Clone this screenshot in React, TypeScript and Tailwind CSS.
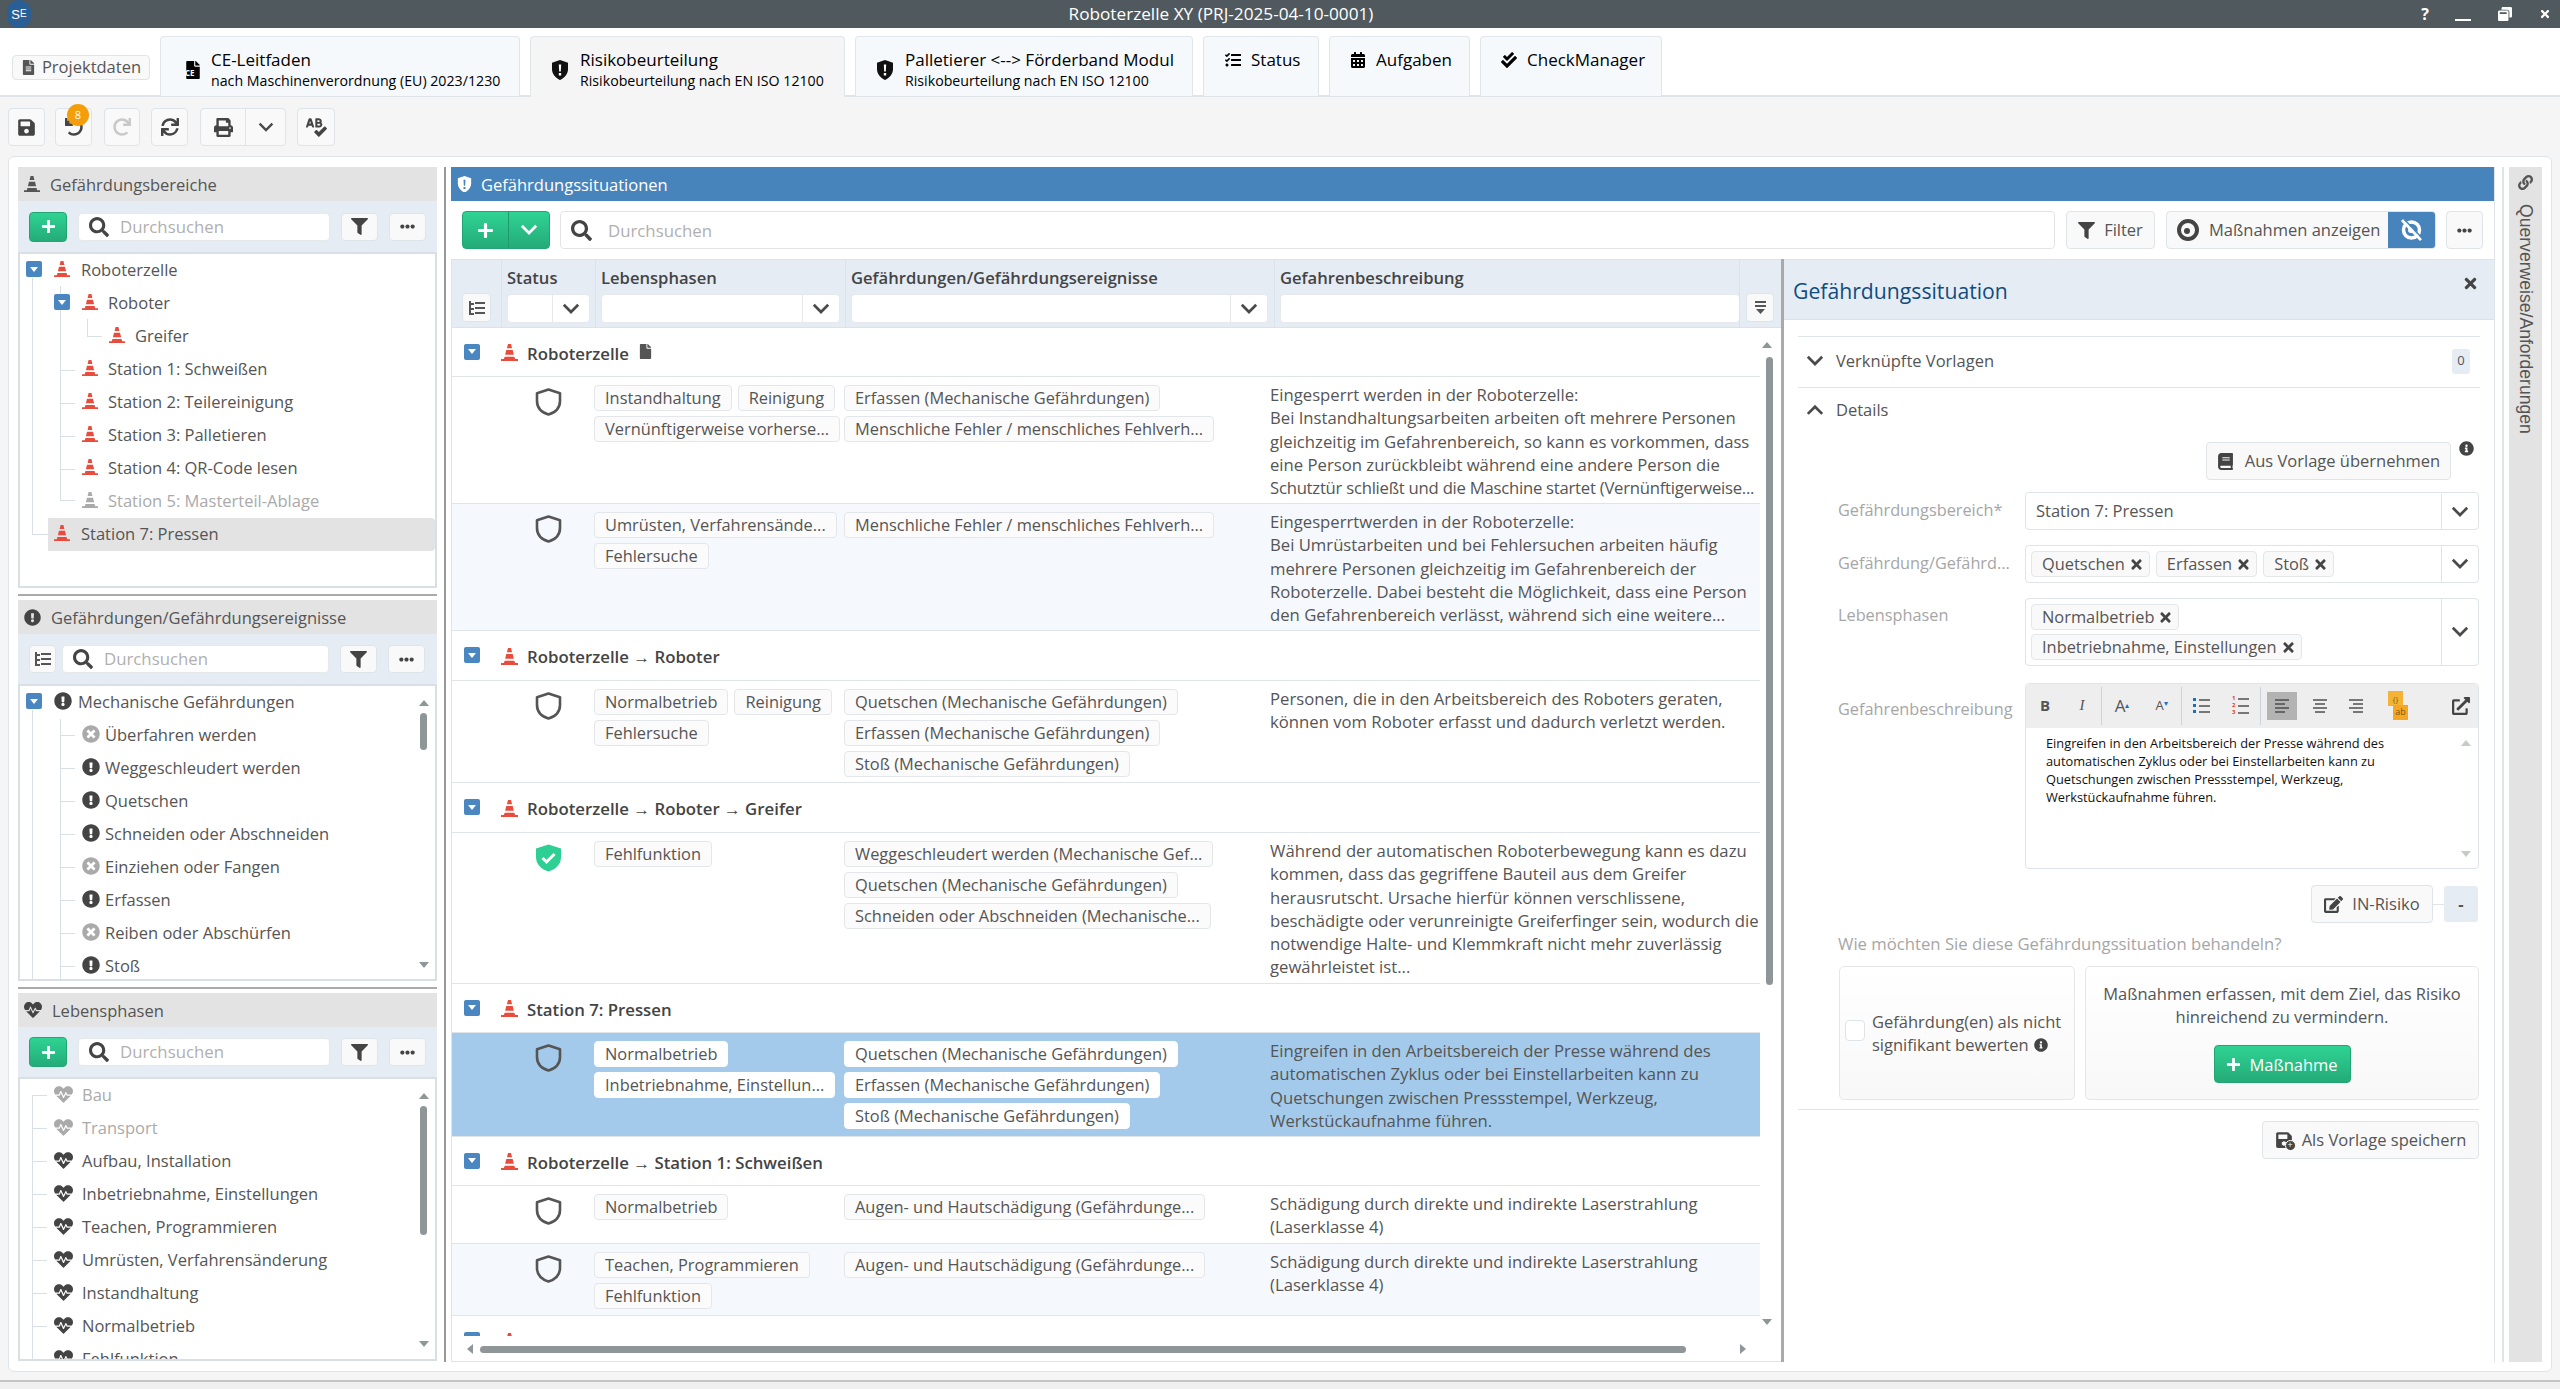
import type { ReactNode } from "react";
import {
  FaBook,
  FaCalendarAlt,
  FaCheckDouble,
  FaEdit,
  FaEllipsisH,
  FaExclamationCircle,
  FaExternalLinkAlt,
  FaFile,
  FaFileAlt,
  FaFilter,
  FaHeartbeat,
  FaInfoCircle,
  FaLink,
  FaPlus,
  FaPrint,
  FaRedo,
  FaSave,
  FaSearch,
  FaSpellCheck,
  FaSync,
  FaTasks,
  FaTimes,
  FaTimesCircle,
  FaUndo,
  FaWindowRestore,
} from "react-icons/fa";

const btn = "border border-[#dfe4e8] bg-[#f9f9f9] rounded-[4px] flex items-center justify-center shrink-0";
const green = "bg-linear-to-b from-[#2fd394] to-[#24ab78] border border-[#22a574] rounded-[4px] text-white flex items-center justify-center shrink-0";

function Cone({ color = "#e84c3d", size = 16 }: { color?: string; size?: number }) {
  return (
    <svg width={size} height={size} viewBox="0 0 18 18" className="shrink-0">
      <path fill={color} d="M7.4 0h3.2l1.1 4.4H6.3zM5.6 6.4h6.8l1.2 5H4.4zM3.9 13.4h10.2l.8 2.6H18v2H0v-2h3.1z" />
    </svg>
  );
}

function Chevron({ up = false, size = 18, color = "#4a4a4a" }: { up?: boolean; size?: number; color?: string }) {
  return (
    <svg width={size} height={size * 0.65} viewBox="0 0 20 13" className="shrink-0">
      <path d={up ? "M2 11l8-8 8 8" : "M2 2l8 8 8-8"} fill="none" stroke={color} strokeWidth="3" />
    </svg>
  );
}

function Shield({ ok = false }: { ok?: boolean }) {
  if (ok) {
    return (
      <svg width="29" height="30" viewBox="0 0 29 30" className="shrink-0">
        <path fill="#2ecf92" d="M14.5 1.5 27 5.5V14c0 7.5-5.5 12.5-12.5 14.5C7.5 26.5 2 21.5 2 14V5.5z" />
        <path fill="none" stroke="#fff" strokeWidth="3" d="M8.5 15l4 4 8-8" />
      </svg>
    );
  }
  return (
    <svg width="29" height="30" viewBox="0 0 29 30" className="shrink-0">
      <path fill="none" stroke="#555" strokeWidth="2.6" strokeLinejoin="round" d="M14.5 2.5 26 6.3V14c0 6.8-5 11.5-11.5 13.5C8 25.5 3 20.8 3 14V6.3z" />
    </svg>
  );
}

function AlertShield({ color = "#111", mark = "#fff", size = 18 }: { color?: string; mark?: string; size?: number }) {
  return (
    <svg width={size} height={size * 1.12} viewBox="0 0 18 20" className="shrink-0">
      <path fill={color} d="M9 0l8 2.6V9c0 5-3.4 8.6-8 11-4.6-2.4-8-6-8-11V2.6z" />
      <path fill={mark} d="M7.8 4.5h2.4l-.4 7H8.2zM7.8 13h2.400v2.400H7.800z" />
    </svg>
  );
}

function TreeListIcon() {
  return (
    <svg width="16" height="14" viewBox="0 0 16 14" className="shrink-0">
      <path fill="#555" d="M0 0h2v14H0zM2 2h3v2H2zM2 7h3v2H2zM2 12h3v2H2zM6 1h10v2H6zM6 6h10v2H6zM6 11h10v2H6z" />
    </svg>
  );
}

function Tri({ down = false }: { down?: boolean }) {
  return (
    <svg width="10" height="6" viewBox="0 0 10 6">
      <path fill="#8e9698" d={down ? "M0 0h10L5 6z" : "M0 6h10L5 0z"} />
    </svg>
  );
}

function Expander() {
  return (
    <span className="w-[16px] h-[16px] rounded-[2px] bg-[#4a86c0] flex items-center justify-center shrink-0">
      <svg width="8" height="5" viewBox="0 0 8 5">
        <path fill="#fff" d="M0 0h8L4 5z" />
      </svg>
    </span>
  );
}

function Tab({ w, active, icon, title, sub, gap }: { w: string; active?: boolean; icon: ReactNode; title: string; sub?: string; gap: string }) {
  return (
    <div className={`${w} h-[60px] shrink-0 rounded-t-[4px] border border-[#e1e6ea] flex items-start text-black ${active ? "bg-[#f5f5f5] border-b-0 h-[61px] relative z-10" : "bg-[#f5f9fc] border-b-0"}`}>
      <div className={`flex ${gap} ${sub ? "items-center h-[44px] mt-[11px]" : "items-center h-[30px] mt-[8px]"}`}>
        {icon}
        <div className="whitespace-nowrap">
          <div className="text-[17px] leading-[22px]">{title}</div>
          {sub && <div className="text-[14.2px] leading-[20px]">{sub}</div>}
        </div>
      </div>
    </div>
  );
}

function TitleBar() {
  return (
    <div className="h-[28px] bg-[#50595e] flex items-center text-white shrink-0 relative">
      <div className="ml-[7px] w-[24px] h-[28px] rounded-full bg-[#2a5f96] flex items-center justify-center text-[13px] leading-none font-['Liberation_Sans',sans-serif]">
        S<span className="text-[10px]">E</span>
      </div>
      <div className="w-[2442px] text-center text-[17.2px] leading-[28px] absolute left-0 top-0">Roboterzelle XY (PRJ-2025-04-10-0001)</div>
      <div className="ml-auto flex items-center mr-[9px]">
        <span className="text-[16px] font-bold mr-[26px]">?</span>
        <span className="w-[16px] h-[2px] bg-white mt-[12px] mr-[27px]" />
        <FaWindowRestore size={14} className="mr-[27px]" />
        <FaTimes size={12} />
      </div>
    </div>
  );
}

function FileCe() {
  return (
    <span className="relative w-[14px] h-[18px] shrink-0">
      <FaFile size={18} className="text-black" />
      <span className="absolute left-[1px] top-[7px] text-[8px] leading-[9px] font-bold text-white">CE</span>
    </span>
  );
}

function TabRow() {
  return (
    <div className="h-[69px] bg-white border-b-2 border-[#dfe4e8] flex items-end shrink-0 pl-[12px]">
      <div className={`${btn} w-[138px] h-[25px] mr-[10px] mb-[15px] gap-[6px] text-[16.5px] text-[#555]`}>
        <FaFileAlt size={15} />
        Projektdaten
      </div>
      <div className="flex gap-[10px] -mb-[2px]">
        <Tab w="w-[360px] pl-[23px]" gap="gap-[13px]" icon={<FileCe />} title="CE-Leitfaden" sub="nach Maschinenverordnung (EU) 2023/1230" />
        <Tab w="w-[315px] pl-[20px]" gap="gap-[11px]" active icon={<AlertShield />} title="Risikobeurteilung" sub="Risikobeurteilung nach EN ISO 12100" />
        <Tab w="w-[338px] pl-[20px]" gap="gap-[11px]" icon={<AlertShield />} title="Palletierer <--> Förderband Modul" sub="Risikobeurteilung nach EN ISO 12100" />
        <Tab w="w-[116px] pl-[21px]" gap="gap-[10px]" icon={<FaTasks size={16} />} title="Status" />
        <Tab w="w-[141px] pl-[20px]" gap="gap-[10px]" icon={<FaCalendarAlt size={16} />} title="Aufgaben" />
        <Tab w="w-[182px] pl-[20px]" gap="gap-[10px]" icon={<FaCheckDouble size={16} />} title="CheckManager" />
      </div>
    </div>
  );
}

function MainToolbar() {
  return (
    <div className="h-[59px] flex items-start pt-[11px] pl-[8px] shrink-0 text-[#444]">
      <div className={`${btn} w-[37px] h-[38px]`}>
        <FaSave size={19} />
      </div>
      <div className={`${btn} w-[37px] h-[38px] ml-[10px] relative`}>
        <FaUndo size={18} />
        <span className="absolute -top-[5px] left-[11px] w-[22px] h-[22px] rounded-full bg-[#f59e0b] text-white text-[11px] flex items-center justify-center">8</span>
      </div>
      <div className={`${btn} w-[36px] h-[38px] ml-[12px] text-[#c9c9c9]`}>
        <FaRedo size={18} />
      </div>
      <div className={`${btn} w-[37px] h-[38px] ml-[11px]`}>
        <FaSync size={18} />
      </div>
      <div className={`${btn} w-[86px] h-[38px] ml-[12px]`}>
        <span className="w-[45px] h-full flex items-center justify-center border-r border-[#dfe4e8]">
          <FaPrint size={19} />
        </span>
        <span className="flex-1 flex justify-center">
          <Chevron size={16} />
        </span>
      </div>
      <div className={`${btn} w-[38px] h-[38px] ml-[11px]`}>
        <FaSpellCheck size={21} />
      </div>
    </div>
  );
}

function SmallSearch({ w }: { w: string }) {
  return (
    <div className={`${w} h-[28px] bg-white border border-[#e6e9ec] rounded-[4px] flex items-center gap-[11px] pl-[10px] shrink-0`}>
      <FaSearch size={20} className="text-[#444]" />
      <span className="text-[16.8px] text-[#b0b0b0]">Durchsuchen</span>
    </div>
  );
}

function Section({
  icon,
  title,
  tree,
  add,
  toolH,
  treeH,
  children,
}: {
  icon: ReactNode;
  title: string;
  tree?: boolean;
  add?: boolean;
  toolH: string;
  treeH: string;
  children: ReactNode;
}) {
  return (
    <div className="w-[419px] flex flex-col shrink-0">
      <div className="h-[34px] bg-[#e3e3e3] flex items-center pl-[6px] gap-[10px] text-[16.5px] text-[#555]">
        {icon}
        <span className="pt-[2px]">{title}</span>
      </div>
      <div className={`${toolH} bg-[#e6ecf4] flex items-center pl-[11px] pr-[12px]`}>
        {add && (
          <div className={`${green} w-[38px] h-[30px] mr-[11px]`}>
            <FaPlus size={15} />
          </div>
        )}
        {tree && (
          <div className={`${btn} w-[27px] h-[28px] mr-[6px]`}>
            <TreeListIcon />
          </div>
        )}
        <SmallSearch w={add ? "w-[252px]" : "w-[267px]"} />
        <div className={`${btn} w-[37px] h-[28px] ml-[11px] text-[#444]`}>
          <FaFilter size={17} />
        </div>
        <div className={`${btn} w-[37px] h-[28px] ml-[11px] text-[#444]`}>
          <FaEllipsisH size={15} />
        </div>
      </div>
      <div className={`${treeH} relative border-2 border-[#d8dfe5] overflow-hidden bg-white text-[16.5px] text-[#555]`}>{children}</div>
    </div>
  );
}

function TreeRow({ pl, exp, icon, text, muted, selected, gap }: { pl: string; exp?: boolean; icon: ReactNode; text: string; muted?: boolean; selected?: boolean; gap: string }) {
  return (
    <div className={`h-[33px] shrink-0 flex items-center relative whitespace-nowrap ${pl} ${muted ? "text-[#aaaaaa]" : ""}`}>
      {selected && <span className="absolute left-[28px] right-0 top-0 bottom-0 bg-[#e3e3e3] rounded-r-[4px]" />}
      {exp && (
        <span className="mr-[12px] relative -mt-[3px]">
          <Expander />
        </span>
      )}
      <span className={`relative -mt-[3px] ${gap}`}>{icon}</span>
      <span className="relative">{text}</span>
    </div>
  );
}

function Line({ c }: { c: string }) {
  return <span className={`absolute bg-[#d8dfe5] ${c}`} />;
}

function MiniScroll({ thumb, up, down }: { thumb: string; up: string; down: string }) {
  return (
    <>
      <span className={`absolute left-[399px] ${up}`}>
        <Tri />
      </span>
      <span className={`absolute left-[400px] w-[7px] rounded-full bg-[#8e9698] ${thumb}`} />
      <span className={`absolute left-[399px] ${down}`}>
        <Tri down />
      </span>
    </>
  );
}

function LeftColumn() {
  const hz = (muted: boolean) =>
    muted ? <FaTimesCircle size={18} className="text-[#aaaaaa]" /> : <FaExclamationCircle size={18} className="text-[#444]" />;
  const heart = (muted: boolean) => <FaHeartbeat size={19} className={muted ? "text-[#aaaaaa]" : "text-[#444]"} />;
  return (
    <div className="w-[419px] shrink-0 flex flex-col">
      <Section add icon={<Cone color="#555" />} title="Gefährdungsbereiche" toolH="h-[51px]" treeH="h-[336px]">
        <Line c="left-[12px] top-[24px] w-px h-[256px]" />
        <Line c="left-[12px] top-[280px] w-[16px] h-px" />
        <Line c="left-[40px] top-[32px] w-px h-[214px]" />
        <Line c="left-[40px] top-[116px] w-[15px] h-px" />
        <Line c="left-[40px] top-[149px] w-[15px] h-px" />
        <Line c="left-[40px] top-[182px] w-[15px] h-px" />
        <Line c="left-[40px] top-[215px] w-[15px] h-px" />
        <Line c="left-[40px] top-[246px] w-[15px] h-px" />
        <Line c="left-[67px] top-[65px] w-px h-[17px]" />
        <Line c="left-[67px] top-[82px] w-[15px] h-px" />
        <TreeRow pl="pl-[6px]" exp gap="mr-[11px]" icon={<Cone />} text="Roboterzelle" />
        <TreeRow pl="pl-[34px]" exp gap="mr-[10px]" icon={<Cone />} text="Roboter" />
        <TreeRow pl="pl-[89px]" gap="mr-[10px]" icon={<Cone />} text="Greifer" />
        <TreeRow pl="pl-[62px]" gap="mr-[10px]" icon={<Cone />} text="Station 1: Schweißen" />
        <TreeRow pl="pl-[62px]" gap="mr-[10px]" icon={<Cone />} text="Station 2: Teilereinigung" />
        <TreeRow pl="pl-[62px]" gap="mr-[10px]" icon={<Cone />} text="Station 3: Palletieren" />
        <TreeRow pl="pl-[62px]" gap="mr-[10px]" icon={<Cone />} text="Station 4: QR-Code lesen" />
        <TreeRow pl="pl-[62px]" gap="mr-[10px]" muted icon={<Cone color="#aaaaaa" />} text="Station 5: Masterteil-Ablage" />
        <TreeRow pl="pl-[34px]" gap="mr-[11px]" selected icon={<Cone />} text="Station 7: Pressen" />
      </Section>
      <div className="h-[2px] bg-[#aaaaaa] mt-[6px] mb-[4px]" />
      <Section tree icon={<FaExclamationCircle size={17} className="text-[#444]" />} title="Gefährdungen/Gefährdungsereignisse" toolH="h-[50px]" treeH="h-[297px]">
        <Line c="left-[12px] top-[24px] w-px h-[280px]" />
        <Line c="left-[40px] top-[33px] w-px h-[270px]" />
        <Line c="left-[40px] top-[49px] w-[15px] h-px" />
        <Line c="left-[40px] top-[82px] w-[15px] h-px" />
        <Line c="left-[40px] top-[115px] w-[15px] h-px" />
        <Line c="left-[40px] top-[148px] w-[15px] h-px" />
        <Line c="left-[40px] top-[181px] w-[15px] h-px" />
        <Line c="left-[40px] top-[214px] w-[15px] h-px" />
        <Line c="left-[40px] top-[247px] w-[15px] h-px" />
        <Line c="left-[40px] top-[280px] w-[15px] h-px" />
        <TreeRow pl="pl-[6px]" exp gap="mr-[6px]" icon={hz(false)} text="Mechanische Gefährdungen" />
        <TreeRow pl="pl-[62px]" gap="mr-[5px]" icon={hz(true)} text="Überfahren werden" />
        <TreeRow pl="pl-[62px]" gap="mr-[5px]" icon={hz(false)} text="Weggeschleudert werden" />
        <TreeRow pl="pl-[62px]" gap="mr-[5px]" icon={hz(false)} text="Quetschen" />
        <TreeRow pl="pl-[62px]" gap="mr-[5px]" icon={hz(false)} text="Schneiden oder Abschneiden" />
        <TreeRow pl="pl-[62px]" gap="mr-[5px]" icon={hz(true)} text="Einziehen oder Fangen" />
        <TreeRow pl="pl-[62px]" gap="mr-[5px]" icon={hz(false)} text="Erfassen" />
        <TreeRow pl="pl-[62px]" gap="mr-[5px]" icon={hz(true)} text="Reiben oder Abschürfen" />
        <TreeRow pl="pl-[62px]" gap="mr-[5px]" icon={hz(false)} text="Stoß" />
        <MiniScroll up="top-[14px]" thumb="top-[27px] h-[37px]" down="top-[276px]" />
      </Section>
      <div className="h-[2px] bg-[#aaaaaa] mt-[6px] mb-[4px]" />
      <Section add icon={<FaHeartbeat size={18} className="text-[#444]" />} title="Lebensphasen" toolH="h-[50px]" treeH="h-[284px]">
        <Line c="left-[12px] top-[16px] w-px h-[268px]" />
        <Line c="left-[12px] top-[16px] w-[15px] h-px" />
        <Line c="left-[12px] top-[49px] w-[15px] h-px" />
        <Line c="left-[12px] top-[82px] w-[15px] h-px" />
        <Line c="left-[12px] top-[115px] w-[15px] h-px" />
        <Line c="left-[12px] top-[148px] w-[15px] h-px" />
        <Line c="left-[12px] top-[181px] w-[15px] h-px" />
        <Line c="left-[12px] top-[214px] w-[15px] h-px" />
        <Line c="left-[12px] top-[247px] w-[15px] h-px" />
        <Line c="left-[12px] top-[280px] w-[15px] h-px" />
        <TreeRow pl="pl-[34px]" gap="mr-[9px]" muted icon={heart(true)} text="Bau" />
        <TreeRow pl="pl-[34px]" gap="mr-[9px]" muted icon={heart(true)} text="Transport" />
        <TreeRow pl="pl-[34px]" gap="mr-[9px]" icon={heart(false)} text="Aufbau, Installation" />
        <TreeRow pl="pl-[34px]" gap="mr-[9px]" icon={heart(false)} text="Inbetriebnahme, Einstellungen" />
        <TreeRow pl="pl-[34px]" gap="mr-[9px]" icon={heart(false)} text="Teachen, Programmieren" />
        <TreeRow pl="pl-[34px]" gap="mr-[9px]" icon={heart(false)} text="Umrüsten, Verfahrensänderung" />
        <TreeRow pl="pl-[34px]" gap="mr-[9px]" icon={heart(false)} text="Instandhaltung" />
        <TreeRow pl="pl-[34px]" gap="mr-[9px]" icon={heart(false)} text="Normalbetrieb" />
        <TreeRow pl="pl-[34px]" gap="mr-[9px]" icon={heart(false)} text="Fehlfunktion" />
        <MiniScroll up="top-[14px]" thumb="top-[27px] h-[129px]" down="top-[262px]" />
      </Section>
    </div>
  );
}

function Tag({ text, on }: { text: string; on?: boolean }) {
  return (
    <span className={`h-[26px] px-[10px] rounded-[4px] border whitespace-nowrap flex items-center text-[16.4px] text-[#555] ${on ? "bg-white border-white" : "bg-[#fbfbfb] border-[#e3e7ea]"}`}>
      {text}
    </span>
  );
}

type Row = { h: string; ok?: boolean; alt?: boolean; on?: boolean; phases: string[]; hazards: string[]; desc: string[] };

function GridRow({ r }: { r: Row }) {
  return (
    <div className={`${r.h} shrink-0 flex border-b border-[#dfe4e8] ${r.on ? "bg-[#a3caeb]" : r.alt ? "bg-[#f5f8fc]" : "bg-white"}`}>
      <div className="w-[82px] shrink-0" />
      <div className="w-[29px] shrink-0 pt-[10px]">
        <Shield ok={r.ok} />
      </div>
      <div className="w-[31px] shrink-0" />
      <div className="w-[250px] shrink-0 pt-[8px] flex flex-wrap content-start gap-x-[6px] gap-y-[5px]">
        {r.phases.map((p) => (
          <Tag key={p} text={p} on={r.on} />
        ))}
      </div>
      <div className="w-[426px] shrink-0 pt-[8px] flex flex-wrap content-start gap-x-[6px] gap-y-[5px]">
        {r.hazards.map((p) => (
          <Tag key={p} text={p} on={r.on} />
        ))}
      </div>
      <div className="flex-1 pt-[6px] text-[16.7px] leading-[23.3px] text-[#555] whitespace-nowrap overflow-hidden">
        {r.desc.map((d) => (
          <div key={d} className={d.endsWith("Vernünftigerweise...") ? "tracking-[-0.25px]" : ""}>
            {d}
          </div>
        ))}
      </div>
    </div>
  );
}

function Group({ title, file, h = "h-[50px]" }: { title: string; file?: boolean; h?: string }) {
  return (
    <div className={`${h} shrink-0 flex items-center border-b border-[#dfe4e8] pl-[12px] pt-[3px] text-[16.8px] font-semibold text-[#444] whitespace-nowrap`}>
      <span className="-mt-[4px]">
        <Expander />
      </span>
      <span className="ml-[21px] mr-[9px] -mt-[2px]">
        <Cone size={17} />
      </span>
      {title}
      {file && <FaFile size={15} className="ml-[9px] -mt-[4px] text-[#555]" />}
    </div>
  );
}

const rows: Record<string, Row[]> = {
  a: [
    {
      h: "h-[127px]",
      phases: ["Instandhaltung", "Reinigung", "Vernünftigerweise vorherse..."],
      hazards: ["Erfassen (Mechanische Gefährdungen)", "Menschliche Fehler / menschliches Fehlverh..."],
      desc: [
        "Eingesperrt werden in der Roboterzelle:",
        "Bei Instandhaltungsarbeiten arbeiten oft mehrere Personen",
        "gleichzeitig im Gefahrenbereich, so kann es vorkommen, dass",
        "eine Person zurückbleibt während eine andere Person die",
        "Schutztür schließt und die Maschine startet (Vernünftigerweise...",
      ],
    },
    {
      h: "h-[127px]",
      alt: true,
      phases: ["Umrüsten, Verfahrensände...", "Fehlersuche"],
      hazards: ["Menschliche Fehler / menschliches Fehlverh..."],
      desc: [
        "Eingesperrtwerden in der Roboterzelle:",
        "Bei Umrüstarbeiten und bei Fehlersuchen arbeiten häufig",
        "mehrere Personen gleichzeitig im Gefahrenbereich der",
        "Roboterzelle. Dabei besteht die Möglichkeit, dass eine Person",
        "den Gefahrenbereich verlässt, während sich eine weitere...",
      ],
    },
  ],
  b: [
    {
      h: "h-[102px]",
      phases: ["Normalbetrieb", "Reinigung", "Fehlersuche"],
      hazards: ["Quetschen (Mechanische Gefährdungen)", "Erfassen (Mechanische Gefährdungen)", "Stoß (Mechanische Gefährdungen)"],
      desc: ["Personen, die in den Arbeitsbereich des Roboters geraten,", "können vom Roboter erfasst und dadurch verletzt werden."],
    },
  ],
  c: [
    {
      h: "h-[151px]",
      ok: true,
      phases: ["Fehlfunktion"],
      hazards: ["Weggeschleudert werden (Mechanische Gef...", "Quetschen (Mechanische Gefährdungen)", "Schneiden oder Abschneiden (Mechanische..."],
      desc: [
        "Während der automatischen Roboterbewegung kann es dazu",
        "kommen, dass das gegriffene Bauteil aus dem Greifer",
        "herausrutscht. Ursache hierfür können verschlissene,",
        "beschädigte oder verunreinigte Greiferfinger sein, wodurch die",
        "notwendige Halte- und Klemmkraft nicht mehr zuverlässig",
        "gewährleistet ist...",
      ],
    },
  ],
  d: [
    {
      h: "h-[104px]",
      on: true,
      phases: ["Normalbetrieb", "Inbetriebnahme, Einstellun..."],
      hazards: ["Quetschen (Mechanische Gefährdungen)", "Erfassen (Mechanische Gefährdungen)", "Stoß (Mechanische Gefährdungen)"],
      desc: [
        "Eingreifen in den Arbeitsbereich der Presse während des",
        "automatischen Zyklus oder bei Einstellarbeiten kann zu",
        "Quetschungen zwischen Pressstempel, Werkzeug,",
        "Werkstückaufnahme führen.",
      ],
    },
  ],
  e: [
    {
      h: "h-[58px]",
      phases: ["Normalbetrieb"],
      hazards: ["Augen- und Hautschädigung (Gefährdunge..."],
      desc: ["Schädigung durch direkte und indirekte Laserstrahlung", "(Laserklasse 4)"],
    },
    {
      h: "h-[72px]",
      alt: true,
      phases: ["Teachen, Programmieren", "Fehlfunktion"],
      hazards: ["Augen- und Hautschädigung (Gefährdunge..."],
      desc: ["Schädigung durch direkte und indirekte Laserstrahlung", "(Laserklasse 4)"],
    },
  ],
};

function HeaderCell({ w, label, chev, iw }: { w: string; label: string; chev?: boolean; iw?: string }) {
  return (
    <div className={`${w} shrink-0 border-l border-[#dce2e9] pl-[5px] h-full`}>
      <div className="h-[34px] pt-[6px] text-[16.6px] font-semibold text-[#444] whitespace-nowrap">{label}</div>
      <div className={`${iw} h-[29px] bg-white border border-[#e6e9ec] rounded-[4px] flex`}>
        {chev && (
          <span className="ml-auto w-[37px] border-l border-[#e6e9ec] flex items-center justify-center">
            <Chevron />
          </span>
        )}
      </div>
    </div>
  );
}

function Grid() {
  return (
    <div className="w-[1330px] shrink-0 flex flex-col h-full border-l border-[#dfe4e8]">
      <div className="h-[69px] shrink-0 bg-[#e6ecf4] border-y border-[#dce2e9] flex">
        <div className="w-[49px] shrink-0 pl-[10px] pt-[33px]">
          <div className={`${btn} w-[29px] h-[29px]`}>
            <TreeListIcon />
          </div>
        </div>
        <HeaderCell w="w-[94px]" iw="w-[83px]" label="Status" chev />
        <HeaderCell w="w-[250px]" iw="w-[239px]" label="Lebensphasen" chev />
        <HeaderCell w="w-[429px]" iw="w-[417px]" label="Gefährdungen/Gefährdungsereignisse" chev />
        <HeaderCell w="w-[465px]" iw="w-[460px]" label="Gefahrenbeschreibung" />
        <div className="flex-1 border-l border-[#dce2e9] pl-[6px] pt-[33px]">
          <div className={`${btn} w-[28px] h-[29px]`}>
            <svg width="11" height="13" viewBox="0 0 11 13">
              <path fill="#555" d="M0 0h11v2H0zM0 4h11v2H0zM1 8h9l-4.5 5z" />
            </svg>
          </div>
        </div>
      </div>
      <div className="flex-1 relative overflow-hidden">
        <div className="w-[1308px] h-[1008px] flex flex-col overflow-hidden">
          <Group title="Roboterzelle" file h="h-[49px]" />
          {rows.a.map((r) => (
            <GridRow key={r.desc[1]} r={r} />
          ))}
          <Group title="Roboterzelle → Roboter" />
          {rows.b.map((r) => (
            <GridRow key={r.desc[1]} r={r} />
          ))}
          <Group title="Roboterzelle → Roboter → Greifer" />
          {rows.c.map((r) => (
            <GridRow key={r.desc[1]} r={r} />
          ))}
          <Group title="Station 7: Pressen" h="h-[49px]" />
          {rows.d.map((r) => (
            <GridRow key={r.desc[1]} r={r} />
          ))}
          <Group title="Roboterzelle → Station 1: Schweißen" h="h-[49px]" />
          {rows.e.map((r, i) => (
            <GridRow key={i} r={r} />
          ))}
          <Group title="Roboterzelle → Station 2: Teilereinigung" />
        </div>
        <span className="absolute left-[1310px] top-[14px]">
          <Tri />
        </span>
        <span className="absolute left-[1314px] top-[29px] w-[7px] h-[628px] rounded-full bg-[#8e9698]" />
        <span className="absolute left-[1310px] top-[991px]">
          <Tri down />
        </span>
        <div className="absolute left-0 right-0 bottom-0 h-[25px] bg-white border-b border-[#dfe4e8] flex items-center">
          <svg width="6" height="10" viewBox="0 0 6 10" className="ml-[15px]">
            <path fill="#8e9698" d="M6 0v10L0 5z" />
          </svg>
          <span className="ml-[7px] w-[1206px] h-[7px] rounded-full bg-[#8e9698]" />
          <svg width="6" height="10" viewBox="0 0 6 10" className="ml-[54px]">
            <path fill="#8e9698" d="M0 0v10l6-5z" />
          </svg>
        </div>
      </div>
    </div>
  );
}

function Chip({ text }: { text: string }) {
  return (
    <span className="h-[26px] px-[10px] pr-[5px] rounded-[4px] border border-[#e3e7ea] bg-[#f9f9f9] flex items-center gap-[4px] text-[16.4px] text-[#555] whitespace-nowrap">
      {text}
      <FaTimes size={15} className="text-[#444]" />
    </span>
  );
}

function FieldRow({ label, top, children }: { label: string; top?: string; children: ReactNode }) {
  return (
    <div className="flex">
      <div className={`w-[227px] shrink-0 pl-[40px] text-[16.3px] text-[#a6a6a6] whitespace-nowrap ${top ?? "pt-[6px]"}`}>{label}</div>
      {children}
    </div>
  );
}

function EditorToolbar() {
  const sep = <span className="w-px h-[38px] bg-[#c9d3dc] shrink-0" />;
  const line = "h-[2px] bg-[#777]";
  return (
    <div className="h-[44px] bg-[#eeeeee] flex items-center text-[#555] rounded-t-[4px] border-b border-[#eeeeee] shrink-0">
      <span className="w-[36px] text-center font-bold text-[15px] ml-[1px]">B</span>
      <span className="w-[38px] text-center italic text-[15px] font-['Liberation_Serif',serif]">I</span>
      {sep}
      <span className="w-[40px] text-center text-[17px]">
        A<sup className="text-[#1d6fb8] text-[8px]">▴</sup>
      </span>
      <span className="w-[39px] text-center text-[13px]">
        A<sup className="text-[#1d6fb8] text-[8px]">▾</sup>
      </span>
      {sep}
      <span className="w-[39px] flex justify-center">
        <span className="w-[17px] flex flex-col gap-[3px]">
          <span className="flex gap-[3px] items-center"><i className="w-[3px] h-[3px] bg-[#1d6fb8]" /><i className={`${line} flex-1`} /></span>
          <span className="flex gap-[3px] items-center"><i className="w-[3px] h-[3px] bg-[#1d6fb8]" /><i className={`${line} flex-1`} /></span>
          <span className="flex gap-[3px] items-center"><i className="w-[3px] h-[3px] bg-[#1d6fb8]" /><i className={`${line} flex-1`} /></span>
        </span>
      </span>
      <span className="w-[39px] flex justify-center">
        <span className="w-[17px] flex flex-col text-[#d9412f] text-[6px] leading-[7px] font-bold">
          <span className="flex gap-[3px] items-center">1<i className={`${line} flex-1`} /></span>
          <span className="flex gap-[3px] items-center">2<i className={`${line} flex-1`} /></span>
          <span className="flex gap-[3px] items-center">3<i className={`${line} flex-1`} /></span>
        </span>
      </span>
      {sep}
      <span className="ml-[6px] w-[30px] h-[28px] bg-[#b3b3b3] flex flex-col justify-center items-center gap-[2px] shrink-0">
        <i className="w-[14px] h-[2px] bg-[#666]" />
        <i className="w-[10px] h-[2px] bg-[#666] -ml-[4px]" />
        <i className="w-[14px] h-[2px] bg-[#666]" />
        <i className="w-[10px] h-[2px] bg-[#666] -ml-[4px]" />
      </span>
      <span className="ml-[8px] w-[30px] flex flex-col items-center gap-[2px]">
        <i className="w-[14px] h-[2px] bg-[#777]" />
        <i className="w-[10px] h-[2px] bg-[#777]" />
        <i className="w-[14px] h-[2px] bg-[#777]" />
        <i className="w-[10px] h-[2px] bg-[#777]" />
      </span>
      <span className="ml-[6px] w-[30px] flex flex-col items-center gap-[2px]">
        <i className="w-[14px] h-[2px] bg-[#777]" />
        <i className="w-[10px] h-[2px] bg-[#777] ml-[4px]" />
        <i className="w-[14px] h-[2px] bg-[#777]" />
        <i className="w-[10px] h-[2px] bg-[#777] ml-[4px]" />
      </span>
      <span className="ml-[6px]">{sep}</span>
      <span className="ml-[11px] w-[20px] h-[29px] relative shrink-0">
        <span className="absolute left-0 top-0 w-[15px] h-[15px] bg-[#f5b335] text-[8px] leading-[15px] text-center text-[#7a5a10]">{"{}"}</span>
        <span className="absolute right-0 bottom-0 w-[15px] h-[15px] bg-[#f5a623] text-[9px] leading-[14px] text-center text-[#7a5a10]">ab</span>
      </span>
      <FaExternalLinkAlt size={18} className="ml-auto mr-[8px] text-[#444]" />
    </div>
  );
}

function Detail() {
  return (
    <div className="flex-1 flex flex-col h-full text-[#555] text-[16.5px]">
      <div className="h-[61px] bg-[#e6ecf4] shrink-0 flex justify-between border-y border-[#dce2e9]">
        <span className="ml-[9px] mt-[15px] text-[#0f4c81] text-[21.2px] leading-[32px]">Gefährdungssituation</span>
        <FaTimes size={17} className="mr-[15px] mt-[15px] text-[#444]" />
      </div>
      <div className="mx-[14px] mt-[16px] border-t border-[#dfe4e8] h-[51px] flex items-center pb-[2px]">
        <span className="ml-[8px] mr-[12px]">
          <Chevron />
        </span>
        Verknüpfte Vorlagen
        <span className="ml-auto mr-[10px] w-[18px] h-[25px] rounded-[3px] bg-[#e6ecf4] flex items-center justify-center text-[13px]">0</span>
      </div>
      <div className="mx-[14px] border-t border-[#dfe4e8] h-[47px] flex items-center pb-[2px]">
        <span className="ml-[8px] mr-[12px]">
          <Chevron up />
        </span>
        Details
      </div>
      <div className="ml-[14px] w-[681px] flex flex-col">
        <div className="flex justify-end h-[58px] pt-[8px] pr-[28px] relative">
          <div className={`${btn} w-[245px] h-[38px] gap-[11px]`}>
            <FaBook size={17} className="text-[#444]" />
            Aus Vorlage übernehmen
          </div>
          <FaInfoCircle size={15} className="absolute right-[5px] top-[7px] text-[#444]" />
        </div>
        <FieldRow label="Gefährdungsbereich*">
          <div className="w-[454px] h-[38px] border border-[#dfe4e8] rounded-[4px] flex items-center pl-[10px] pt-[1px]">
            Station 7: Pressen
            <span className="ml-auto w-[37px] h-full border-l border-[#dfe4e8] flex items-center justify-center">
              <Chevron />
            </span>
          </div>
        </FieldRow>
        <div className="h-[15px]" />
        <FieldRow label="Gefährdung/Gefährd...">
          <div className="w-[454px] h-[38px] border border-[#dfe4e8] rounded-[4px] flex items-center pl-[5px] gap-[6px]">
            <Chip text="Quetschen" />
            <Chip text="Erfassen" />
            <Chip text="Stoß" />
            <span className="ml-auto w-[37px] h-full border-l border-[#dfe4e8] flex items-center justify-center">
              <Chevron />
            </span>
          </div>
        </FieldRow>
        <div className="h-[15px]" />
        <FieldRow label="Lebensphasen" top="pt-[5px]">
          <div className="w-[454px] h-[68px] border border-[#dfe4e8] rounded-[4px] flex">
            <div className="flex-1 flex flex-col items-start gap-[4px] pl-[5px] pt-[5px]">
              <Chip text="Normalbetrieb" />
              <Chip text="Inbetriebnahme, Einstellungen" />
            </div>
            <span className="w-[37px] border-l border-[#dfe4e8] flex items-center justify-center">
              <Chevron />
            </span>
          </div>
        </FieldRow>
        <div className="h-[17px]" />
        <FieldRow label="Gefahrenbeschreibung" top="pt-[14px]">
          <div className="w-[454px] h-[186px] border border-[#dfe4e8] rounded-[4px] flex flex-col">
            <EditorToolbar />
            <div className="relative flex-1 pl-[20px] pt-[6px] text-[12.8px] leading-[18px] text-[#111] whitespace-nowrap">
              <div>Eingreifen in den Arbeitsbereich der Presse während des</div>
              <div>automatischen Zyklus oder bei Einstellarbeiten kann zu</div>
              <div>Quetschungen zwischen Pressstempel, Werkzeug,</div>
              <div>Werkstückaufnahme führen.</div>
              <span className="absolute right-[7px] top-[12px] opacity-50">
                <Tri />
              </span>
              <span className="absolute right-[7px] bottom-[11px] opacity-50">
                <Tri down />
              </span>
            </div>
          </div>
        </FieldRow>
        <div className="flex justify-end items-center h-[38px] mt-[16px]">
          <div className={`${btn} w-[122px] h-[38px] gap-[9px]`}>
            <FaEdit size={19} className="text-[#444]" />
            IN-Risiko
          </div>
          <span className="w-[11px] h-px bg-[#dfe4e8]" />
          <span className="w-[34px] h-[36px] mr-[1px] bg-[#e6ecf4] rounded-[3px] flex items-center justify-center font-bold">-</span>
        </div>
        <div className="pl-[40px] mt-[9px] text-[#a6a6a6] text-[16.7px] h-[23px] leading-[23px] whitespace-nowrap">Wie möchten Sie diese Gefährdungssituation behandeln?</div>
        <div className="flex pl-[41px] gap-[10px] mt-[11px]">
          <div className="w-[236px] h-[134px] rounded-[5px] border border-[#e3e7ea] bg-linear-to-b from-white to-[#f8f8f8] flex items-center pl-[5px] gap-[7px] leading-[23px]">
            <span className="w-[20px] h-[21px] border border-[#dfe4e8] rounded-[4px] bg-white shrink-0 -mt-[6px]" />
            <div className="whitespace-nowrap">
              <div>Gefährdung(en) als nicht</div>
              <div className="flex items-center gap-[5px]">
                signifikant bewerten
                <FaInfoCircle size={14} className="text-[#444]" />
              </div>
            </div>
          </div>
          <div className="w-[394px] h-[134px] rounded-[5px] border border-[#e3e7ea] bg-linear-to-b from-white to-[#f8f8f8] flex flex-col items-center pt-[15px] leading-[23px]">
            <div>Maßnahmen erfassen, mit dem Ziel, das Risiko</div>
            <div>hinreichend zu vermindern.</div>
            <div className={`${green} w-[137px] h-[38px] mt-[17px] gap-[8px]`}>
              <FaPlus size={15} />
              Maßnahme
            </div>
          </div>
        </div>
        <div className="border-t border-[#dfe4e8] mt-[9px]" />
        <div className="flex justify-end mt-[11px]">
          <div className={`${btn} w-[217px] h-[38px] gap-[9px]`}>
            <span className="relative text-[#444]">
              <FaSave size={18} />
              <span className="absolute -right-[3px] -bottom-[2px] w-[11px] h-[11px] rounded-full bg-[#444] border border-white text-white text-[9px] leading-[8px] text-center">+</span>
            </span>
            Als Vorlage speichern
          </div>
        </div>
      </div>
    </div>
  );
}

function Middle() {
  return (
    <div className="w-[2044px] shrink-0 flex flex-col border-r border-[#dfe4e8]">
      <div className="h-[34px] bg-[#4884bc] text-white flex items-center pl-[6px] gap-[9px] text-[16.5px] shrink-0">
        <AlertShield color="#fff" mark="#4884bc" size={15} />
        <span className="pt-[2px]">Gefährdungssituationen</span>
      </div>
      <div className="h-[58px] shrink-0 flex items-center pl-[11px] text-[#555] text-[16.5px]">
        <div className={`${green} w-[88px] h-[38px]`}>
          <span className="w-[46px] h-full flex items-center justify-center border-r border-[#1f9a6c]">
            <FaPlus size={17} />
          </span>
          <span className="flex-1 flex justify-center">
            <Chevron color="#fff" />
          </span>
        </div>
        <div className="ml-[10px] w-[1495px] h-[38px] bg-white border border-[#e1e5e8] rounded-[4px] flex items-center pl-[10px] gap-[16px]">
          <FaSearch size={21} className="text-[#444]" />
          <span className="text-[16.8px] text-[#b0b0b0] pt-[2px]">Durchsuchen</span>
        </div>
        <div className={`${btn} ml-[11px] w-[89px] h-[38px] gap-[9px]`}>
          <FaFilter size={17} className="text-[#444]" />
          Filter
        </div>
        <div className={`${btn} ml-[11px] w-[270px] h-[38px] overflow-hidden`}>
          <svg width="22" height="22" viewBox="0 0 22 22" className="ml-[10px] shrink-0">
            <circle cx="11" cy="11" r="9" fill="none" stroke="#444" strokeWidth="4" />
            <circle cx="10" cy="12" r="3" fill="#444" />
          </svg>
          <span className="ml-[10px] whitespace-nowrap">Maßnahmen anzeigen</span>
          <span className="ml-auto w-[47px] h-full bg-[#4884bc] flex items-center justify-center shrink-0 text-white">
            <svg width="27" height="26" viewBox="0 0 27 26">
              <circle cx="13.5" cy="13" r="8" fill="none" stroke="#fff" strokeWidth="3.5" />
              <circle cx="13" cy="13" r="3" fill="#fff" />
              <path d="M4 3l19 20" stroke="#fff" strokeWidth="3" />
              <path d="M6 2l19 20" stroke="#4884bc" strokeWidth="1.5" />
            </svg>
          </span>
        </div>
        <div className={`${btn} ml-[10px] w-[37px] h-[38px] text-[#444]`}>
          <FaEllipsisH size={15} />
        </div>
      </div>
      <div className="flex-1 flex min-h-0">
        <Grid />
        <div className="w-[3px] shrink-0 bg-[#aaaaaa]" />
        <Detail />
      </div>
    </div>
  );
}

function Rail() {
  return (
    <div className="ml-[7px] flex shrink-0">
      <div className="w-[2px] bg-[#dfe4e8]" />
      <div className="ml-[5px] w-[33px] bg-[#e3e3e3] flex flex-col items-center pt-[8px] text-[#555]">
        <FaLink size={15} className="shrink-0" />
        <span className="mt-[14px] text-[17.6px] leading-[22px] [writing-mode:vertical-rl] whitespace-nowrap font-['Liberation_Sans',sans-serif]">
          Querverweise/Anforderungen
        </span>
      </div>
    </div>
  );
}

export default function App() {
  return (
    <div className="w-[2560px] h-[1389px] overflow-hidden flex flex-col bg-[#f5f5f5] font-['Open_Sans',sans-serif]">
      <TitleBar />
      <TabRow />
      <MainToolbar />
      <div className="mx-[8px] h-[1216px] shrink-0 bg-white border border-[#dfe4e8] rounded-[6px] pl-[9px] pt-[10px] flex">
        <div className="flex h-[1195px]">
          <LeftColumn />
          <div className="ml-[7px] w-[2px] bg-[#999999] shrink-0" />
          <div className="ml-[5px] flex">
            <Middle />
            <Rail />
          </div>
        </div>
      </div>
      <div className="mt-[8px] flex-1 bg-[#f0f0f0] border-t-2 border-[#c4c4c4]" />
    </div>
  );
}
